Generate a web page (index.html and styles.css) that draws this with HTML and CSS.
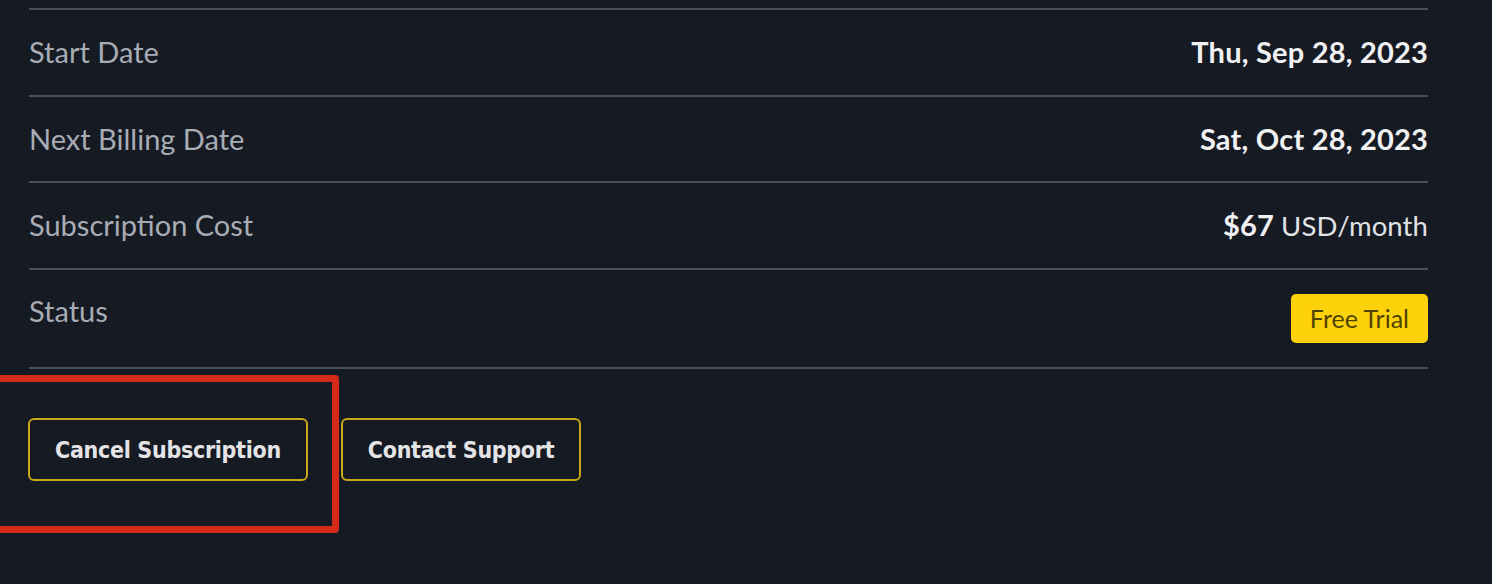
FILE: index.html
```html
<!DOCTYPE html>
<html lang="en">
<head>
<meta charset="utf-8">
<title>Subscription</title>
<link rel="stylesheet" href="styles.css">
</head>
<body>
<main class="panel">
  <div class="details">
    <div class="row">
      <span class="label">Start Date</span>
      <span class="value strong">Thu, Sep 28, 2023</span>
    </div>
    <div class="row">
      <span class="label">Next Billing Date</span>
      <span class="value strong">Sat, Oct 28, 2023</span>
    </div>
    <div class="row">
      <span class="label">Subscription Cost</span>
      <span class="value"><b class="strong">$67</b> USD/month</span>
    </div>
    <div class="row row-status">
      <span class="label">Status</span>
      <span class="badge">Free Trial</span>
    </div>
  </div>
  <div class="actions">
    <button class="btn" type="button">Cancel Subscription</button>
    <button class="btn" type="button">Contact Support</button>
    <div class="highlight"></div>
  </div>
</main>
</body>
</html>
```
FILE: styles.css
```css
html, body {
  margin: 0;
  padding: 0;
  background: #161a23;
  height: 100%;
}

body {
  font-family: "Lato", "Noto Sans", sans-serif;
  color: #e9eaec;
}

.panel {
  width: 1399px;
  padding-left: 29px;
  padding-top: 8px;
}

.details {
  border-bottom: 2px solid #4a4e58;
}

.row {
  display: flex;
  justify-content: space-between;
  align-items: flex-start;
  border-top: 2px solid #4a4e58;
  padding: 25px 0 25px;
  min-height: 34.5px;
}

.row-status {
  padding: 24px 0 24px;
}

.label {
  font-size: 29px;
  line-height: 34px;
  color: #a8acb4;
}

.value {
  font-size: 27.5px;
  line-height: 34px;
  color: #e2e3e6;
  letter-spacing: 0.1px;
}

.strong {
  font-weight: 700;
  color: #f1f1f3;
  font-size: 29px;
  letter-spacing: 0.2px;
}

.badge {
  background: #fdd20b;
  color: #4f4300;
  font-size: 25px;
  line-height: 49px;
  padding: 0 19px;
  border-radius: 5px;
}

.actions {
  position: relative;
  display: flex;
  gap: 33px;
  padding-top: 49px;
  margin-left: -1px;
}

.btn {
  font-family: "DejaVu Sans Condensed", "Lato", sans-serif;
  font-weight: 700;
  font-size: 23px;
  color: #e4e4e6;
  background: #161a23;
  border: 2px solid #c9a819;
  border-radius: 6px;
  height: 63px;
  padding: 0 25px;
  letter-spacing: -0.3px;
}

.highlight {
  position: absolute;
  left: -35px;
  top: 6px;
  width: 332px;
  height: 144px;
  border: 7px solid #d42a18;
  border-radius: 4px;
  pointer-events: none;
}
```
